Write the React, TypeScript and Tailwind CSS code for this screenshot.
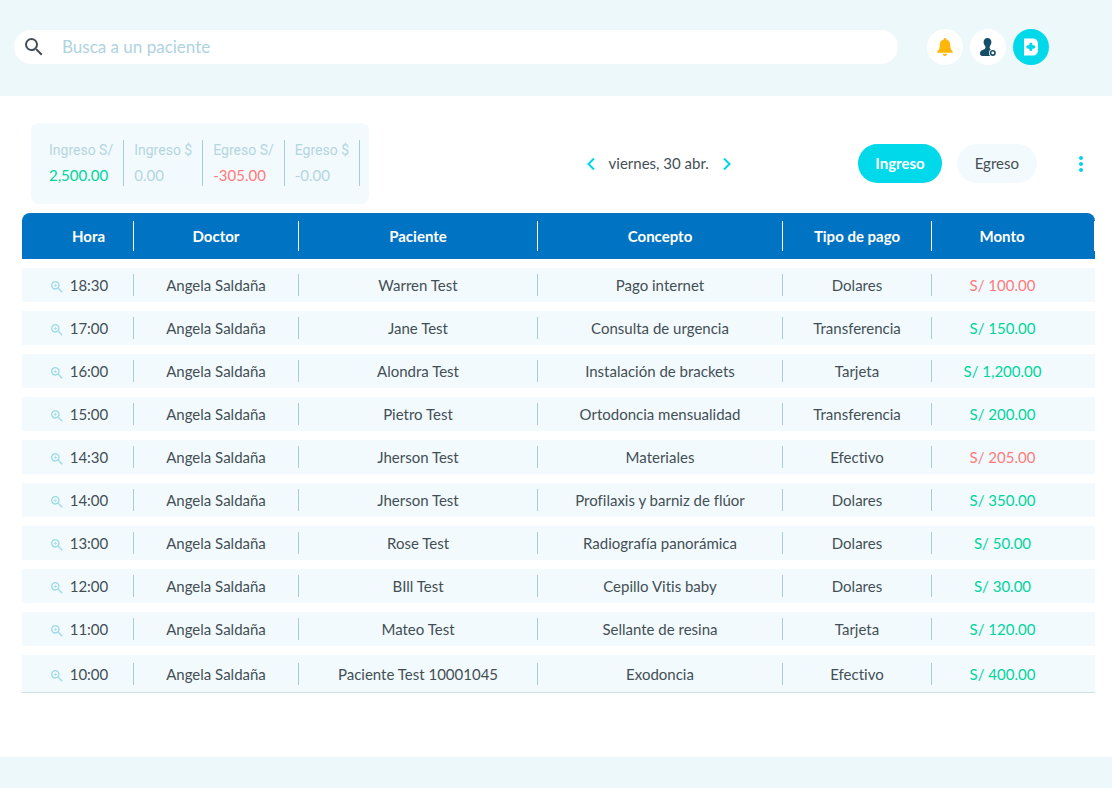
import { MdSearch, MdZoomIn, MdMoreVert } from "react-icons/md";

const summary = [
  { label: "Ingreso S/", value: "2,500.00", color: "text-[#00d49c]" },
  { label: "Ingreso $", value: "0.00", color: "text-[#b4d6df]" },
  { label: "Egreso S/", value: "-305.00", color: "text-[#ff7b7b]" },
  { label: "Egreso $", value: "-0.00", color: "text-[#b4d6df]" },
];

const columns = ["Hora", "Doctor", "Paciente", "Concepto", "Tipo de pago", "Monto"];

const movements = [
  { time: "18:30", patient: "Warren Test", concept: "Pago internet", payment: "Dolares", amount: "100.00", expense: true },
  { time: "17:00", patient: "Jane Test", concept: "Consulta de urgencia", payment: "Transferencia", amount: "150.00" },
  { time: "16:00", patient: "Alondra Test", concept: "Instalación de brackets", payment: "Tarjeta", amount: "1,200.00" },
  { time: "15:00", patient: "Pietro Test", concept: "Ortodoncia mensualidad", payment: "Transferencia", amount: "200.00" },
  { time: "14:30", patient: "Jherson Test", concept: "Materiales", payment: "Efectivo", amount: "205.00", expense: true },
  { time: "14:00", patient: "Jherson Test", concept: "Profilaxis y barniz de flúor", payment: "Dolares", amount: "350.00" },
  { time: "13:00", patient: "Rose Test", concept: "Radiografía panorámica", payment: "Dolares", amount: "50.00" },
  { time: "12:00", patient: "BIll Test", concept: "Cepillo Vitis baby", payment: "Dolares", amount: "30.00" },
  { time: "11:00", patient: "Mateo Test", concept: "Sellante de resina", payment: "Tarjeta", amount: "120.00" },
  { time: "10:00", patient: "Paciente Test 10001045", concept: "Exodoncia", payment: "Efectivo", amount: "400.00" },
];

function BellIcon() {
  return (
    <svg viewBox="0 0 16 18" className="h-[18px] w-4" fill="#ffb60a">
      <path d="M8 0c.8 0 1.300.6 1.300 1.400C11.800 2 13.200 4 13.200 6.600c0 3.200.5 5.100 2.500 6.900v1.300H.3v-1.300c2-1.800 2.500-3.700 2.500-6.900C2.800 4 4.200 2 6.700 1.400 6.700.6 7.200 0 8 0z" />
      <path d="M5.800 15.800h4.400c-.2 1.300-1 2.100-2.200 2.100s-2-.8-2.200-2.100z" />
    </svg>
  );
}

function UserIcon() {
  return (
    <svg viewBox="0 0 18 20" className="h-5 w-[18px]">
      <path
        d="M8.500 1C6.100 1 4.600 2.700 4.600 5.100c0 1.600.6 2.800 1.400 3.700.5.600.5 1.600.3 2.300-.3 1-1.400 1.500-2.700 2C1.900 13.700 1 14.700 1 16.700 1 18.300 2.200 19 4.500 19H11l2.500-6c-1.500-.4-2.500-1-2.800-2-.2-.7-.1-1.600.4-2.200.7-.9 1.300-2.100 1.300-3.700C12.400 2.700 10.900 1 8.500 1z"
        fill="#164e68"
      />
      <circle cx="13.800" cy="15.900" r="3.800" fill="#fff" />
      <circle cx="13.800" cy="15.900" r="2.200" fill="none" stroke="#164e68" strokeWidth="1.600" />
    </svg>
  );
}

function BrandIcon() {
  return (
    <svg viewBox="0 0 16 18" className="h-[18px] w-4">
      <path d="M1 .5h8.500C13 .5 15 2.500 15 6v6c0 3.500-2 5.500-5.500 5.500H1z" fill="#fff" />
      <path
        d="M7.800 4.500c1 0 1.600.9 1.500 2.500 1.600-.1 3 .6 3 1.900S10.900 10.800 9.300 10.700c.1 1.600-.5 2.300-1.500 2.300s-1.600-.7-1.500-2.300c-1.600.1-3-.5-3-1.800S4.700 6.900 6.300 7C6.200 5.400 6.800 4.500 7.800 4.500z"
        fill="#00d9ea"
      />
    </svg>
  );
}

function Chevron({ d }: { d: string }) {
  return (
    <svg viewBox="0 0 8 14" className="h-3.5 w-2" fill="none" stroke="#00d5e8" strokeWidth="2">
      <path d={d} />
    </svg>
  );
}

function TopBar() {
  return (
    <header className="flex h-24 items-center gap-[29px] bg-[#edf8fb] pb-0.5 pl-3.5 pr-[63px]">
      <label className="flex h-[34px] flex-1 items-center gap-4 rounded-full bg-white pl-2 pr-4">
        <MdSearch className="size-6 shrink-0 text-[#454f57]" />
        <input
          type="search"
          aria-label="Buscar paciente"
          placeholder="Busca a un paciente"
          className="w-full bg-transparent text-[17px] outline-none placeholder:text-[#aed3e0]"
        />
      </label>
      <nav className="flex gap-[7px]">
        <button aria-label="Notificaciones" className="flex size-9 items-center justify-center rounded-full bg-white">
          <BellIcon />
        </button>
        <button aria-label="Usuario" className="flex size-9 items-center justify-center rounded-full bg-white">
          <UserIcon />
        </button>
        <button aria-label="Clínica" className="flex size-9 items-center justify-center rounded-full bg-[#00d9ea]">
          <BrandIcon />
        </button>
      </nav>
    </header>
  );
}

function Toolbar() {
  return (
    <div className="flex items-center pl-[9px]">
      <dl className="flex rounded-lg bg-[#f2fafd] pb-[18px] pl-2 pr-[9px] pt-[17px]">
        {summary.map((item) => (
          <div key={item.label} className="h-[46px] border-r border-[#a9cdd8] px-2.5">
            <dt className="font-[Roboto] text-sm leading-5 text-[#b4d6df]">{item.label}</dt>
            <dd className={`mt-1 text-[15px] leading-[22px] ${item.color}`}>{item.value}</dd>
          </div>
        ))}
      </dl>

      <div className="flex flex-1 items-center justify-center gap-3.5 pl-[90px] text-[15px]">
        <button aria-label="Día anterior">
          <Chevron d="M7 1.500 1.500 7 7 12.500" />
        </button>
        <span>viernes, 30 abr.</span>
        <button aria-label="Día siguiente">
          <Chevron d="M1 1.500 6.500 7 1 12.500" />
        </button>
      </div>

      <div className="flex items-center pr-0.5 text-[15px]">
        <button className="h-[39px] rounded-full bg-[#00d9ea] px-[17px] font-bold text-white">Ingreso</button>
        <button className="ml-[15px] h-[39px] rounded-full bg-[#f2fafd] px-[18px]">Egreso</button>
        <button aria-label="Más opciones" className="ml-8">
          <MdMoreVert className="size-6 text-[#00d5e8]" />
        </button>
      </div>
    </div>
  );
}

function MovementsTable() {
  const cell = "flex h-[22px] items-center justify-center border-r border-[#a9cdd8]";

  return (
    <table className="w-full table-fixed border-separate border-spacing-x-0 border-spacing-y-[9px] text-[15px] leading-5">
      <colgroup>
        <col className="w-[112px]" />
        <col className="w-[165px]" />
        <col className="w-[239px]" />
        <col className="w-[245px]" />
        <col className="w-[149px]" />
        <col className="w-[163px]" />
      </colgroup>
      <thead>
        <tr className="h-[46px] text-white">
          {columns.map((name) => (
            <th key={name} className="group bg-[#0073c2] p-0 font-bold first:rounded-tl-lg last:rounded-tr-lg">
              <div className="flex h-[30px] items-center justify-center border-r border-white group-first:pl-[22px] group-last:pr-[22px]">
                {name}
              </div>
            </th>
          ))}
        </tr>
      </thead>
      <tbody>
        {movements.map((row) => (
          <tr
            key={row.time}
            className="h-[34px] bg-[#f2fafd] last:h-[38px] *:p-0 last:*:border-b last:*:border-[#cfe0e4]"
          >
            <td>
              <div className="flex h-[22px] items-center border-r border-[#a9cdd8] pl-[27px]">
                <button aria-label={`Ver detalle de ${row.time}`} className="pt-1">
                  <MdZoomIn className="size-4 text-[#9bdbe3]" />
                </button>
                <span className="w-12 text-center">{row.time}</span>
              </div>
            </td>
            <td>
              <div className={cell}>Angela Saldaña</div>
            </td>
            <td>
              <div className={cell}>{row.patient}</div>
            </td>
            <td>
              <div className={cell}>{row.concept}</div>
            </td>
            <td>
              <div className={cell}>{row.payment}</div>
            </td>
            <td className={row.expense ? "text-[#ff7b7b]" : "text-[#00d49c]"}>
              <div className="pr-[22px] text-center">S/ {row.amount}</div>
            </td>
          </tr>
        ))}
      </tbody>
    </table>
  );
}

export default function App() {
  return (
    <div className="flex min-h-screen flex-col bg-white font-[Lato,sans-serif] text-[#444f55] [font-variant-ligatures:none]">
      <TopBar />
      <main className="flex-1 pb-8 pl-[22px] pr-[17px] pt-[27px]">
        <Toolbar />
        <MovementsTable />
      </main>
      <footer className="h-[31px] bg-[#edf8fb]" />
    </div>
  );
}
